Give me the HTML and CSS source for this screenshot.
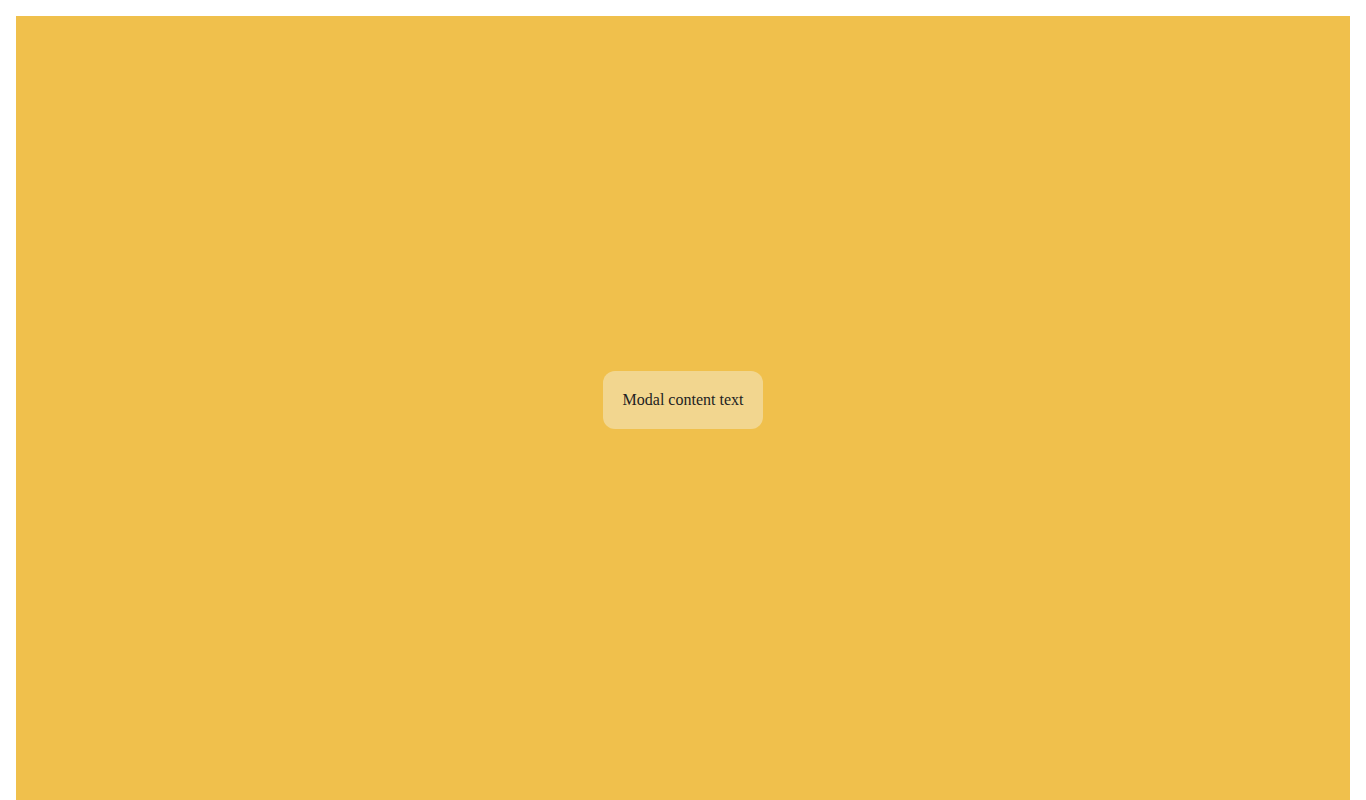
FILE: index.html
```html
<!DOCTYPE html>
<html lang="en">
<head>
<meta charset="utf-8">
<title>Modal</title>
<link rel="stylesheet" href="styles.css">
</head>
<body>
<div class="backdrop"></div>
<div class="overlay">
  <div class="modal">Modal content text</div>
</div>
</body>
</html>
```
FILE: styles.css
```css
html, body {
  background: #ffffff;
}
body {
  margin: 8px;
  font-family: "Liberation Serif", "Times New Roman", serif;
  font-size: 16px;
}
.backdrop {
  margin: 8px;
  height: 100vh;
  background: #f0c04c;
}
.overlay {
  position: fixed;
  inset: 0;
  display: flex;
  align-items: center;
  justify-content: center;
}
.modal {
  background: #f2d68f;
  color: #222222;
  padding: 20px;
  border-radius: 12px;
  line-height: 18px;
}
```
